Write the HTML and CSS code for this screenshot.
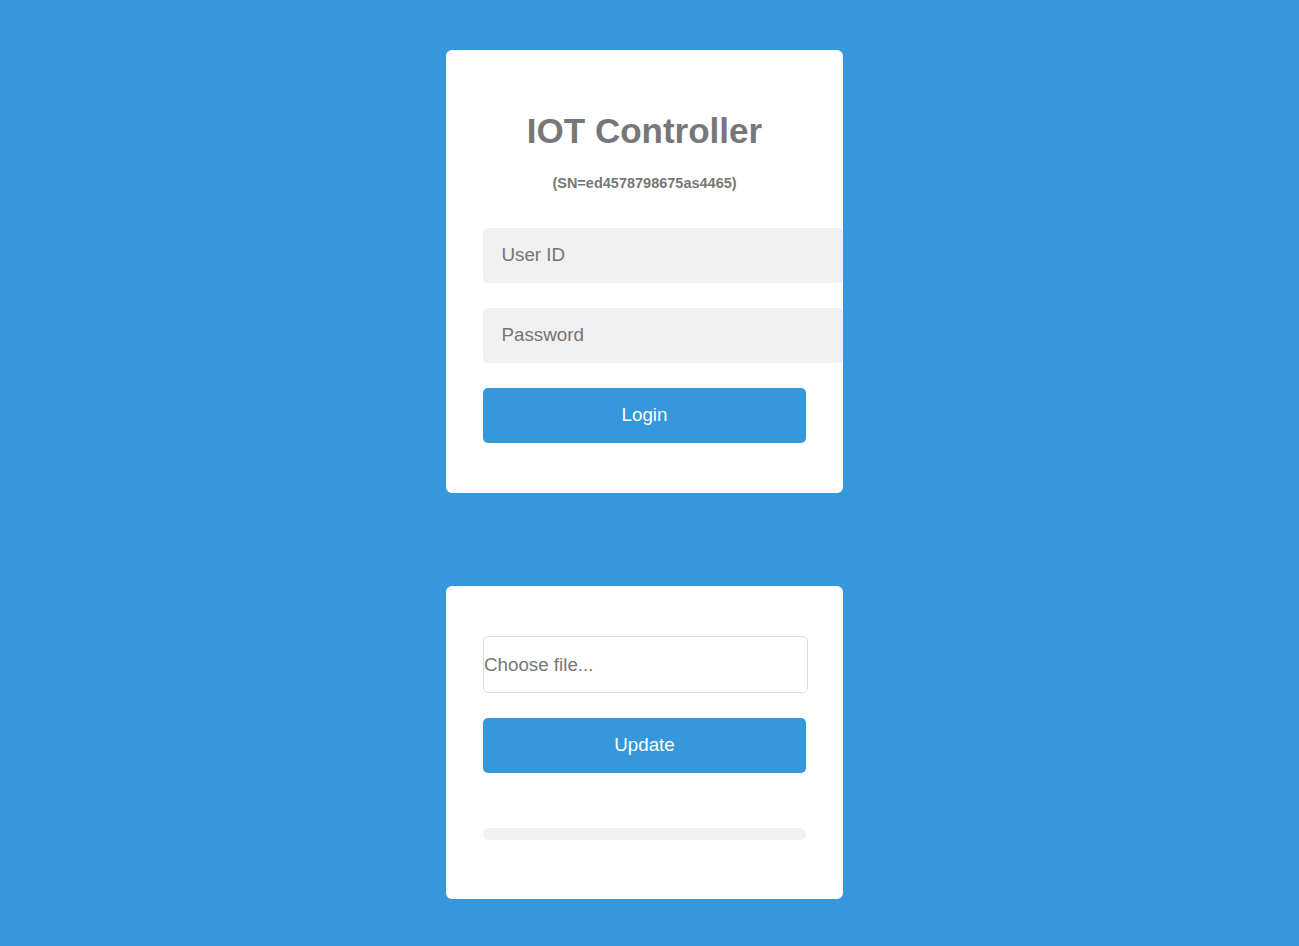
FILE: index.html
```html
<!DOCTYPE html>
<html>
<head>
<meta charset="utf-8">
<title>IOT Controller</title>
<link rel="stylesheet" href="styles.css">
</head>
<body>
<main class="page">
  <form class="card login-card">
    <h1 class="title">IOT Controller</h1>
    <h5 class="serial">(SN=ed4578798675as4465)</h5>
    <input class="field" type="text" placeholder="User ID">
    <input class="field" type="password" placeholder="Password">
    <button class="btn" type="button">Login</button>
  </form>
  <form class="card update-card">
    <label class="file-input">Choose file...</label>
    <button class="btn" type="button">Update</button>
    <div class="prgbar"><div class="bar"></div></div>
  </form>
</main>
</body>
</html>
```

FILE: styles.css
```css
html, body {
  margin: 0;
  padding: 0;
}
body {
  background: #3498db;
  font-family: "Liberation Sans", Arial, sans-serif;
  font-size: 17.5px;
  color: #777;
}
.page {
  display: flex;
  flex-direction: column;
  align-items: center;
  padding: 50px 10px 48px 0;
  gap: 93px;
}
.card {
  background: #fff;
  width: 323px;
  padding: 37.5px 37px;
  border-radius: 6px;
  display: flex;
  flex-direction: column;
  align-items: flex-start;
  text-align: center;
  margin: 0;
}
.title {
  width: 100%;
  margin: 23.5px 0 0;
  font-size: 35px;
  line-height: 39px;
  font-weight: bold;
  color: #777;
}
.serial {
  width: 100%;
  margin: 24.5px 0 24.5px;
  font-size: 14.5px;
  line-height: 16px;
  font-weight: bold;
  color: #777;
}
.field {
  display: block;
  box-sizing: content-box;
  width: 100%;
  height: 55px;
  padding: 0 18.5px;
  margin: 12.5px 0;
  border: 0;
  border-radius: 5px;
  background: #f1f1f1;
  font-family: "Liberation Sans", Arial, sans-serif;
  font-size: 18.75px;
  color: #777;
  outline: none;
}
.field::placeholder {
  color: #757575;
}
.btn {
  display: block;
  width: 100%;
  height: 55px;
  margin: 12.5px 0;
  border: 0;
  border-radius: 5px;
  background: #3498db;
  color: #fff;
  font-family: "Liberation Sans", Arial, sans-serif;
  font-size: 18.75px;
  padding: 0;
}
.file-input {
  display: block;
  box-sizing: content-box;
  width: 100%;
  height: 55px;
  line-height: 55px;
  margin: 12.5px 0;
  padding: 0;
  border: 1px solid #ddd;
  border-radius: 5px;
  text-align: left;
  font-size: 18.75px;
  color: #777;
}
.prgbar {
  width: 100%;
  height: 12.5px;
  margin: 42.5px 0 21px;
  background: #f1f1f1;
  border-radius: 12.5px;
}
.bar {
  width: 0;
  height: 12.5px;
  background: #3498db;
  border-radius: 12.5px;
}
```
